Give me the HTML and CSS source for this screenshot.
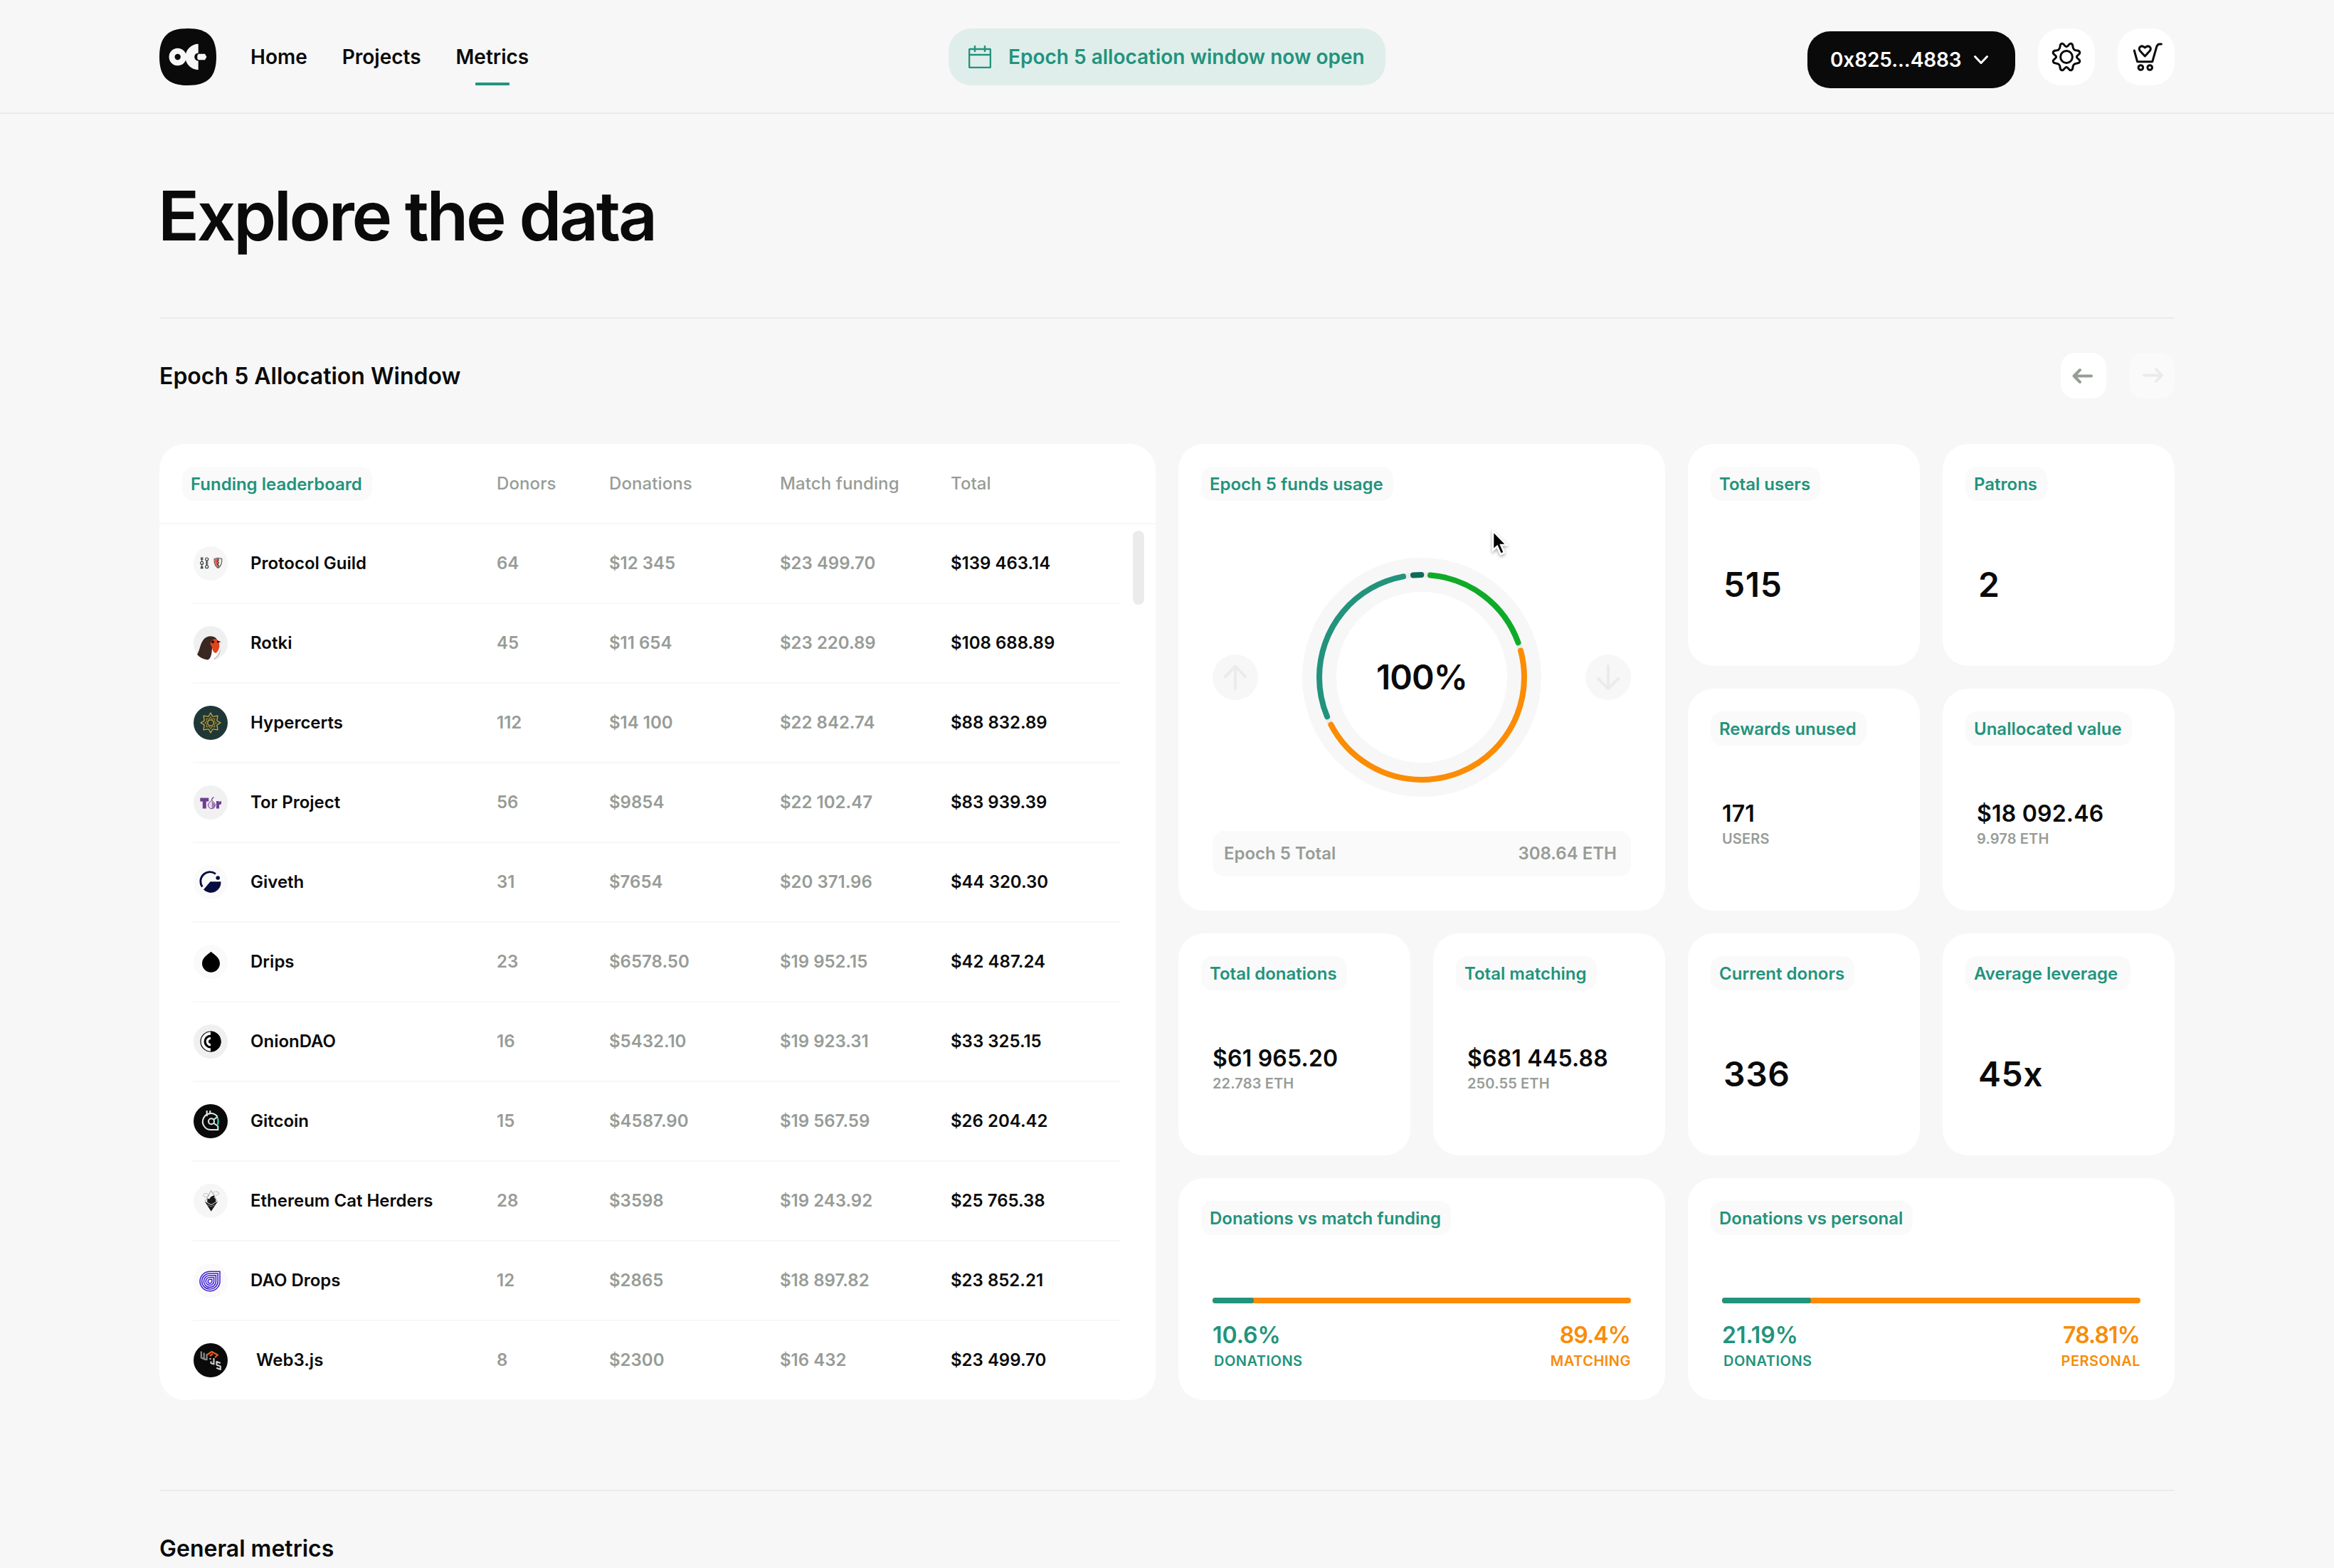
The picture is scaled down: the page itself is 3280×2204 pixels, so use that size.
FILE: index.html
```html
<!DOCTYPE html>
<html lang="en">
<head>
<meta charset="utf-8">
<title>Metrics</title>
<link rel="stylesheet" href="styles.css">
</head>
<body>
<header class="topbar">
  <div class="topbar-left">
    <svg class="logo" viewBox="0 0 80 80">
      <path d="M40 0C68 0 80 12 80 40S68 80 40 80 0 68 0 40 12 0 40 0Z" fill="#0a0a0a"/>
      <circle cx="25.7" cy="40" r="8.2" fill="none" stroke="#f7f7f7" stroke-width="8"/>
      <path d="M54.7 21.8a18.2 18.2 0 0 0 0 36.4V45.5a5.5 5.5 0 0 1 0-11Z" fill="#f7f7f7"/>
      <path d="M54.7 35.8H64l2.4 4.2-2.4 4.2h-9.3l-1.4-2v-4Z" fill="#f7f7f7"/>
    </svg>
    <nav class="nav">
      <a class="nav-link">Home</a>
      <a class="nav-link">Projects</a>
      <a class="nav-link active">Metrics</a>
    </nav>
  </div>
  <div class="banner">
    <svg class="banner-icon" viewBox="0 0 32 32" fill="none" stroke="#22937c" stroke-width="2.4">
      <rect x="1.1" y="5" width="29.8" height="25.9" rx="1"/><path d="M1 13h30M9 0v9M23 0v9"/>
    </svg>
    <span>Epoch 5 allocation window now open</span>
  </div>
  <div class="topbar-right">
    <div class="wallet">
      <span>0x825...4883</span>
      <svg class="chevron" viewBox="0 0 24 16" fill="none" stroke="#fff" stroke-width="3" stroke-linecap="round" stroke-linejoin="round"><path d="M3.5 3.5 12 12.500l8.500-9"/></svg>
    </div>
    <div class="square-button">
      <svg viewBox="-40 -40 80 80" fill="none" stroke="#0a0a0a" stroke-width="3" stroke-linecap="round">
        <circle r="8.400"/>
        <path id="cog" d="M0-14.500C3.200-14.500 3-19.600 6.600-18.700C10.500-17.600 7.500-13.300 10.600-10.600C13.300-7.500 17.600-10.500 18.700-6.600C19.600-3 14.500-3.200 14.500 0"/>
        <use href="#cog" transform="rotate(90)"/><use href="#cog" transform="rotate(180)"/><use href="#cog" transform="rotate(270)"/>
      </svg>
    </div>
    <div class="square-button">
      <svg viewBox="0 0 80 80" fill="none" stroke="#0a0a0a" stroke-width="3" stroke-linecap="round" stroke-linejoin="round">
        <path d="M23.300 31 27.600 46.700H48.800L54.800 25.500Q55.800 21.900 59 21.900H61.400"/>
        <path d="M38.300 39 31.200 31.300C28 27 33.500 22.200 38.300 27 43.100 22.200 48.600 27 45.400 31.300Z"/>
        <circle cx="32.400" cy="55" r="3.300"/><circle cx="45.200" cy="55" r="3.300"/>
      </svg>
    </div>
  </div>
</header>

<main class="page">
  <h1 class="title">Explore the data</h1>

  <section class="section">
    <div class="section-head">
      <h2>Epoch 5 Allocation Window</h2>
      <div class="pager">
        <div class="pager-button"><svg viewBox="0 0 64 64" fill="none" stroke="#979c97" stroke-width="4" stroke-linecap="round" stroke-linejoin="round"><path d="M43 32.500H18.500M27 24l-8.500 8.500L27 41"/></svg></div>
        <div class="pager-button disabled"><svg viewBox="0 0 64 64" fill="none" stroke="#ebebeb" stroke-width="4" stroke-linecap="round" stroke-linejoin="round"><path d="M21 31.500h24.500M38 23l8 8.500-8 8.500"/></svg></div>
      </div>
    </div>

    <div class="dashboard">
      <div class="card leaderboard">
        <div class="board-head">
          <div><span class="tag">Funding leaderboard</span></div>
          <span>Donors</span><span>Donations</span><span>Match funding</span><span>Total</span>
        </div>
        <div class="board-body">
          <div class="row">
            <svg class="avatar" viewBox="0 0 48 48"><circle cx="24" cy="24" r="24" fill="#f6f6f6"/>
              <g fill="none" stroke="#3a4242" stroke-width="1.200"><circle cx="11.700" cy="23.400" r="2"/><path d="M9.700 16h4M10 18.500l1.700-1.500 1.700 1.500M11.700 17v4M11.700 26v4M10 28.500l1.700 1.500 1.700-1.500M9.700 30.700h4"/><circle cx="18.700" cy="18" r="2"/><circle cx="18.700" cy="28.700" r="2"/><path d="M18.700 20v7M17 22.200h3.400M17 24.600h3.400"/></g>
              <path d="M29 17.500l5.500-1.300 5.300 1.300c.3 6-1.200 10.500-5.300 13-4.100-2.500-5.800-7-5.500-13Z" fill="#eee" stroke="#555" stroke-width="1.100"/><path d="M29.600 18l4.900-1.100v12.600c-3.500-2.300-5-6.300-4.900-11.500Z" fill="#ee5a48"/><path d="M33.500 17.500l2 1.500-2 2 2 2-2 2 2 2-1 2.500" stroke="#553c3c" stroke-width="1.200" fill="none"/></svg>
            <span class="name">Protocol Guild</span><span>64</span><span>$12 345</span><span>$23 499.70</span><span class="total">$139 463.14</span>
          </div>
          <div class="row">
            <svg class="avatar" viewBox="0 0 48 48"><circle cx="24" cy="24" r="24" fill="#f0f0f0"/>
              <path d="M22 30c4-3 12-3 15 1 3 6 1 12-5 15.500Q27 48.500 20 47.500Z" fill="#fff"/><path d="M37.500 31q2.500 10-7.500 16l-2-1q8-5 9.500-15Z" fill="#c9c9c9"/>
              <path d="M5 40C9 34 9 25 14 19 18 13.500 27 12.500 31.500 17c3 3 2 7-1 9-6 3-4 8-5.500 14-1 4-2.500 6.500-5 7.500Q10 46 5 40Z" fill="#3a2722"/>
              <path d="M24 22.500c2-4.500 8-6 11-1.500 2.500 6 1.500 13-3.500 17-5.500-1-4.500-7-6.500-10-1.500-2-1.800-3.500-1-5.500Z" fill="#e0441b"/><circle cx="27" cy="22.300" r="2" fill="#111"/><path d="M33 20.300l5.800 2-5.800 1.200Z" fill="#111"/></svg>
            <span class="name">Rotki</span><span>45</span><span>$11 654</span><span>$23 220.89</span><span class="total">$108 688.89</span>
          </div>
          <div class="row">
            <svg class="avatar" viewBox="-24 -24 48 48"><circle r="24" fill="#1f3737"/>
              <g fill="none" stroke="#d0ab3c" stroke-width="1.300" stroke-linejoin="round"><circle r="4.200"/>
              <path id="star" d="M0-14 2.600-9.300Q3.500-8.400 5-9.200L9.900-9.900 9.200-5Q8.400-3.500 9.300-2.600L14 0 9.300 2.600Q8.400 3.500 9.200 5L9.900 9.900 5 9.200Q3.500 8.400 2.600 9.300L0 14-2.600 9.300Q-3.500 8.400-5 9.200L-9.900 9.900-9.200 5Q-8.400 3.500-9.300 2.600L-14 0-9.300-2.600Q-8.400-3.500-9.200-5L-9.900-9.900-5-9.200Q-3.500-8.400-2.600-9.300Z"/>
              <use href="#star" transform="scale(.6)"/></g></svg>
            <span class="name">Hypercerts</span><span>112</span><span>$14 100</span><span>$22 842.74</span><span class="total">$88 832.89</span>
          </div>
          <div class="row">
            <svg class="avatar" viewBox="0 0 48 48"><circle cx="24" cy="24" r="24" fill="#f1f1f1"/>
              <path d="M9.300 17.500h12v5h-3.500v10h-5v-10H9.300ZM32 22h3.500v1.500Q36.500 22 39 22v4.500q-3-.5-3 1.500v4.500h-4Z" fill="#6f3f92"/>
              <path d="M25.600 21.500c-.3-2.500 1-4 2.900-4.800" fill="none" stroke="#6f3f92" stroke-width="1.300"/>
              <path d="M25.500 21c2 2 5 3.500 5 7a5 4.700 0 0 1-10 0c0-3.500 3-5 5-7Z" fill="#e4dcea" stroke="#6f3f92" stroke-width="1"/><path d="M25.800 22c1.500 2 4.200 3.500 4.200 6a4.500 4.200 0 0 1-4.200 4.200Z" fill="#9a78b2"/></svg>
            <span class="name">Tor Project</span><span>56</span><span>$9854</span><span>$22 102.47</span><span class="total">$83 939.39</span>
          </div>
          <div class="row">
            <svg class="avatar" viewBox="0 0 48 48"><circle cx="24" cy="24" r="24" fill="#fafafa"/>
              <path d="M12.300 30.500A13.200 13.200 0 0 1 31 12.300" fill="none" stroke="#060b40" stroke-width="2.800"/><circle cx="34.200" cy="18" r="2.800" fill="#060b40"/><path d="M23.500 23.300H38.500A14.400 14.400 0 0 1 14 34.600Z" fill="#060b40"/></svg>
            <span class="name">Giveth</span><span>31</span><span>$7654</span><span>$20 371.96</span><span class="total">$44 320.30</span>
          </div>
          <div class="row">
            <svg class="avatar" viewBox="0 0 48 48"><circle cx="24" cy="24" r="24" fill="#fafafa"/><path d="M24.500 9.500c2 2.800 12.500 7.500 12.500 16.500a12.500 12.700 0 0 1-25 0c0-9 10.500-13.700 12.500-16.500Z" fill="#000"/></svg>
            <span class="name">Drips</span><span>23</span><span>$6578.50</span><span>$19 952.15</span><span class="total">$42 487.24</span>
          </div>
          <div class="row">
            <svg class="avatar" viewBox="0 0 48 48"><circle cx="24" cy="24" r="24" fill="#f0f0f0"/><circle cx="24" cy="24" r="14" fill="#fff" stroke="#000" stroke-width="1.200"/><path d="M24 14.500a9.500 9.500 0 0 0 0 19Z" fill="#000"/><path d="M24 17.700a6.300 6.300 0 0 0 0 12.600Z" fill="#fff"/><path d="M24 21a3 3 0 0 0 0 6Z" fill="#000"/><path d="M24 9.500a14.500 14.500 0 0 1 0 29Z" fill="#000"/></svg>
            <span class="name">OnionDAO</span><span>16</span><span>$5432.10</span><span>$19 923.31</span><span class="total">$33 325.15</span>
          </div>
          <div class="row">
            <svg class="avatar" viewBox="0 0 48 48"><circle cx="24" cy="24" r="24" fill="#0a0a0a"/>
              <g fill="none" stroke="#dfe3e2" stroke-width="2.100"><path d="M33.500 17.500A11.500 11.500 0 1 0 25 36h9.300V31"/><circle cx="25" cy="24.200" r="4"/><path d="M28 22l6-4.500M28 26.500l6.300 4.500M18.700 9v8M23.300 9v4"/></g><path d="M33.500 19q2.300 5.500 0 10.500" fill="none" stroke="#2fc4b2" stroke-width="2.400"/></svg>
            <span class="name">Gitcoin</span><span>15</span><span>$4587.90</span><span>$19 567.59</span><span class="total">$26 204.42</span>
          </div>
          <div class="row">
            <svg class="avatar" viewBox="0 0 48 48"><circle cx="24" cy="24" r="24" fill="#f6f6f6"/>
              <g fill="none" stroke="#999" stroke-width=".9"><path d="M16.500 24.500 24.700 9.500l8.500 15"/><ellipse cx="17.500" cy="16" rx="4" ry="2.300" stroke-dasharray="2 1"/><ellipse cx="31.500" cy="13.500" rx="4" ry="2.500" stroke-dasharray="2 1"/></g>
              <path d="M19.500 20.500l2.800 1c1-2.800 3.500-5.300 6.300-4.800 1.700.5 1.200 2.200-.3 2.300 2.500 1 3.300 3.500 3 6.500l-6.600 3.500-5.500-3.300Z" fill="#181818"/><path d="M15.800 24.800l8.900 5.200 9.300-5.200-9.300 14Z" fill="#181818"/><path d="M19.500 29.500l5.200 2.600 5.200-2.600" stroke="#bbb" fill="none" stroke-width=".7"/></svg>
            <span class="name">Ethereum Cat Herders</span><span>28</span><span>$3598</span><span>$19 243.92</span><span class="total">$25 765.38</span>
          </div>
          <div class="row">
            <svg class="avatar" viewBox="0 0 48 48"><circle cx="24" cy="24" r="24" fill="#fafafa"/>
              <g fill="#fff" stroke="#4120d0" stroke-width="1.550"><path d="M37 11.300V25.500A14 13.700 0 1 1 23 11.300Z"/><path d="M34.200 14V25.300A11.300 11 0 1 1 23 14Z"/><path d="M31.400 16.800V25.300A8.500 8.300 0 1 1 23 16.800Z"/><path d="M28.600 19.500V25.200A5.700 5.500 0 1 1 23 19.500Z"/><path d="M25.800 22.300V25A2.800 2.800 0 1 1 23 22.300Z"/></g></svg>
            <span class="name">DAO Drops</span><span>12</span><span>$2865</span><span>$18 897.82</span><span class="total">$23 852.21</span>
          </div>
          <div class="row">
            <svg class="avatar" viewBox="0 0 48 48"><circle cx="24" cy="24" r="24" fill="#0a0a0a"/>
              <g fill="none" stroke-width="2.200" stroke-linejoin="round"><path d="M10.800 11.500v9l3.900 1.800 3.900.8V15M14.700 13.500v8.500" stroke="#8d8d8d"/><path d="M19.500 16l6-4 8.500 4.500-4 3.500M27 15l-4 3" stroke="#ea5a23"/><path d="M28.500 21v8.500l-4-1.500v-2.500M23.500 21v2" stroke="#c9c9c9"/><path d="M37.800 28l-5.300-2v4.500l5.300 2V37l-5.600-2.200" stroke="#cfcfcf"/></g></svg>
            <span class="name inset">Web3.js</span><span>8</span><span>$2300</span><span>$16 432</span><span class="total">$23 499.70</span>
          </div>
          <div class="scrollbar"></div>
        </div>
      </div>

      <div class="card funds">
        <span class="tag">Epoch 5 funds usage</span>
        <div class="donut-row">
          <svg class="round-arrow" viewBox="0 0 64 64"><circle cx="32" cy="32" r="32" fill="#f7f7f7"/><path d="M32 48V17M18 31l14-14.500L46 31" fill="none" stroke="#ebebeb" stroke-width="4" stroke-linecap="round" stroke-linejoin="round"/></svg>
          <div class="donut">
            <svg viewBox="-168 -168 336 336" fill="none">
              <circle r="144" stroke="#f7f7f7" stroke-width="48"/>
              <circle r="144" stroke="#ebebeb" stroke-width="8"/>
              <g stroke-width="8" stroke-linecap="round" transform="rotate(-90)">
                <circle r="144" pathLength="360" stroke="#0fab28" stroke-dasharray="65.400 294.600" stroke-dashoffset="-4.800"/>
                <circle r="144" pathLength="360" stroke="#fc8c02" stroke-dasharray="167.500 192.500" stroke-dashoffset="-74.900"/>
                <circle r="144" pathLength="360" stroke="#22937c" stroke-dasharray="102.200 257.800" stroke-dashoffset="-247.400"/>
                <circle r="144" pathLength="360" stroke="#0e6b5a" stroke-dasharray="4.500 355.500" stroke-dashoffset="-355.200"/>
              </g>
            </svg>
            <span class="donut-value">100%</span>
          </div>
          <svg class="round-arrow" viewBox="0 0 64 64"><circle cx="32" cy="32" r="32" fill="#f7f7f7"/><path d="M32 16v31M18 34l14 14 14-14" fill="none" stroke="#ebebeb" stroke-width="4" stroke-linecap="round" stroke-linejoin="round"/></svg>
        </div>
        <div class="funds-total"><span>Epoch 5 Total</span><span>308.64 ETH</span></div>
      </div>

      <div class="card"><span class="tag">Total users</span><div class="big">515</div></div>
      <div class="card"><span class="tag">Patrons</span><div class="big">2</div></div>
      <div class="card"><span class="tag">Rewards unused</span><div class="value">171</div><div class="sub">USERS</div></div>
      <div class="card"><span class="tag">Unallocated value</span><div class="value">$18 092.46</div><div class="sub">9.978 ETH</div></div>
      <div class="card"><span class="tag">Total donations</span><div class="value">$61 965.20</div><div class="sub">22.783 ETH</div></div>
      <div class="card"><span class="tag">Total matching</span><div class="value">$681 445.88</div><div class="sub">250.55 ETH</div></div>
      <div class="card"><span class="tag">Current donors</span><div class="big">336</div></div>
      <div class="card"><span class="tag tag-roomy">Average leverage</span><div class="big">45x</div></div>
      <div class="card wide">
        <span class="tag">Donations vs match funding</span>
        <div class="bar"><div class="bar-fill" style="width:9.9%"></div></div>
        <div class="split"><div class="side teal"><b>10.6%</b><small>DONATIONS</small></div><div class="side orange"><b>89.4%</b><small>MATCHING</small></div></div>
      </div>
      <div class="card wide">
        <span class="tag">Donations vs personal</span>
        <div class="bar"><div class="bar-fill" style="width:21.19%"></div></div>
        <div class="split"><div class="side teal"><b>21.19%</b><small>DONATIONS</small></div><div class="side orange"><b>78.81%</b><small>PERSONAL</small></div></div>
      </div>
    </div>
  </section>

  <section class="section last">
    <div class="section-head"><h2>General metrics</h2></div>
  </section>
</main>

<svg class="cursor" viewBox="0 0 34 46"><path d="M6 4v27.500l6-5.500 5 11 5-2.200-4.700-10.800h8.200Z" fill="#000" stroke="#fff" stroke-width="2.600"/></svg>
</body>
</html>
```
FILE: styles.css
```css
* { box-sizing: border-box; }
body {
  margin: 0;
  position: relative;
  background: #f7f7f7;
  color: #0a0a0a;
  font-family: Inter, "Liberation Sans", sans-serif;
  font-size: 24px;
  font-weight: 600;
}
svg { display: block; }
h1, h2 { margin: 0; font-weight: 600; }

.topbar {
  height: 160px;
  padding: 40px 224px 0;
  border-bottom: 2px solid #ebebeb;
  display: grid;
  grid-template-columns: 1fr auto 1fr;
  align-items: start;
  font-size: 28px;
  line-height: 80px;
}
.topbar-left { display: flex; gap: 48px; }
.logo { width: 80px; height: 80px; }
.nav { display: flex; gap: 49px; }
.nav-link { display: block; height: 80px; }
.nav-link.active::after {
  content: "";
  display: block;
  width: 48px;
  height: 4px;
  margin: -4px auto 0;
  border-radius: 1px;
  background: #22937c;
}
.banner {
  width: 614px;
  height: 80px;
  padding-left: 28px;
  border-radius: 32px;
  background: #dfeeea;
  color: #22937c;
  display: flex;
  align-items: center;
  gap: 24px;
}
.banner-icon { width: 32px; height: 32px; }
.topbar-right { display: flex; justify-content: flex-end; gap: 32px; }
.wallet {
  width: 292px;
  height: 80px;
  margin-top: 4px;
  padding: 0 36px 0 32px;
  border-radius: 32px;
  background: #0a0a0a;
  color: #fff;
  display: flex;
  align-items: center;
  justify-content: space-between;
  letter-spacing: -.1px;
}
.chevron { width: 24px; height: 16px; }
.square-button { width: 80px; height: 80px; border-radius: 32px; background: #fff; }

.page { padding: 87px 224px 0; }
.title {
  height: 199px;
  margin-left: -2px;
  font-size: 96px;
  line-height: 112px;
  letter-spacing: -3.300px;
}
.section { border-top: 2px solid #ebebeb; padding: 48px 0 126px; }
.section-head {
  height: 64px;
  display: flex;
  justify-content: space-between;
  align-items: center;
}
.section-head h2 { font-size: 32px; line-height: 64px; padding-top: 2px; }
.section.last { padding-bottom: 0; }
.last .section-head { height: 60px; }
.last h2 { line-height: 54px; padding-top: 6px; }
.pager { display: flex; gap: 32px; }
.pager-button { width: 64px; height: 64px; border-radius: 20px; background: #fff; }
.pager-button.disabled { background: #fafafa; }

.dashboard {
  margin-top: 64px;
  display: grid;
  grid-template-columns: 1400px repeat(4, 326px);
  grid-template-rows: repeat(4, 312px);
  gap: 32px;
}
.card { background: #fff; border-radius: 36px; padding: 32px; overflow: hidden; }
.wide { grid-column: span 2; }
.tag {
  display: block;
  width: fit-content;
  height: 48px;
  padding: 0 14px 0 12px;
  border-radius: 16px;
  background: #fafafa;
  color: #22937c;
  line-height: 49px;
  white-space: nowrap;
}
.tag-roomy { padding-right: 18px; }
.big { margin: 90px 16px 0; padding-left: 2px; font-size: 48px; line-height: 56px; letter-spacing: .6px; }
.value { margin: 76px 16px 0; font-size: 32px; line-height: 40px; letter-spacing: .2px; white-space: nowrap; }
.sub { margin: -1px 16px 0; font-size: 20px; line-height: 32px; letter-spacing: .15px; color: #979c97; }

.leaderboard { grid-row: span 4; padding: 0; }
.board-head, .row { display: grid; align-items: center; color: #979c97; }
.board-head {
  grid-template-columns: 442px 158px 240px 240px 1fr;
  height: 113px;
  padding: 0 32px;
  border-bottom: 2px solid #f7f7f7;
  font-weight: 500;
  letter-spacing: .1px;
}
.board-head .tag { font-weight: 600; letter-spacing: 0; }
.board-body { position: relative; padding: 0 49px 0 47px; }
.row {
  grid-template-columns: 80px 346px 158px 240px 240px 1fr;
  height: 112px;
  padding-left: 1px;
  border-bottom: 2px solid #f7f7f7;
}
.row span { padding-bottom: 2px; }
.avatar { width: 48px; height: 48px; }
.name, .total { color: #0a0a0a; }
.inset { padding-left: 8px; }
.scrollbar {
  position: absolute;
  top: 9px;
  right: 16px;
  width: 16px;
  height: 104px;
  border-radius: 8px;
  background: #ebebeb;
}

.funds { grid-column: span 2; grid-row: span 2; }
.donut-row {
  margin: 80px 16px 0;
  display: flex;
  justify-content: space-between;
  align-items: center;
}
.round-arrow { width: 64px; height: 64px; }
.donut { width: 336px; height: 336px; display: grid; }
.donut > * { grid-area: 1 / 1; }
.donut-value { place-self: center; font-size: 48px; line-height: 56px; letter-spacing: -.9px; }
.funds-total {
  height: 64px;
  margin: 48px 16px 0;
  padding: 0 20px 0 16px;
  border-radius: 16px;
  background: #fafafa;
  color: #979c97;
  display: flex;
  justify-content: space-between;
  line-height: 64px;
}

.bar { margin: 88px 16px 0; height: 8px; border-radius: 4px; background: #fc8c02; }
.bar-fill { height: 8px; border-radius: 4px; background: #22937c; }
.split { margin: 25px 16px 0; display: flex; justify-content: space-between; }
.side { display: flex; flex-direction: column; }
.side b { font-size: 32px; line-height: 40px; font-weight: 600; }
.side small { font-size: 20px; line-height: 32px; letter-spacing: .5px; }
.teal { color: #22937c; }
.teal small { padding-left: 2px; }
.orange { color: #f88c08; align-items: flex-end; }
.orange b { letter-spacing: -.9px; padding-right: 1px; }

.cursor {
  position: absolute;
  left: 2092px;
  top: 742px;
  width: 34px;
  height: 46px;
  filter: drop-shadow(0 2px 2px rgba(0, 0, 0, .35));
}
```
